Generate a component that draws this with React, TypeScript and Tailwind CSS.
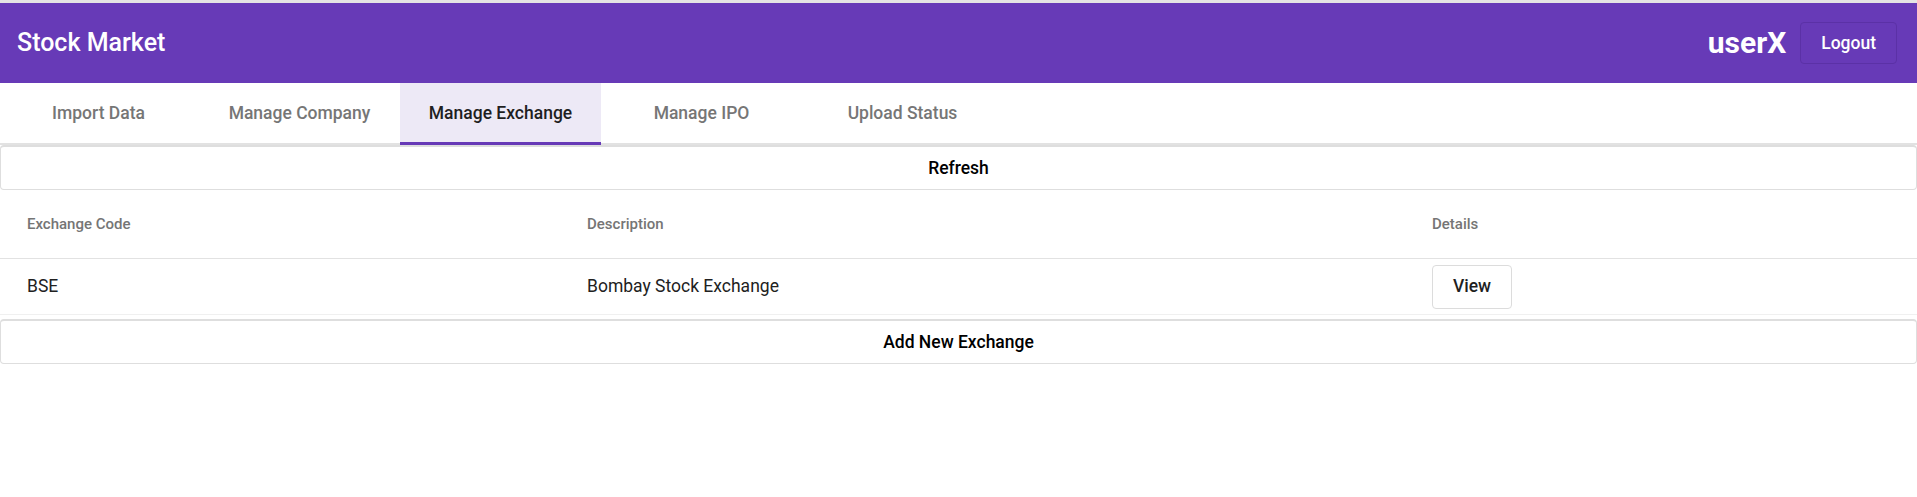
import { useState } from 'react';

const tabs = ['Import Data', 'Manage Company', 'Manage Exchange', 'Manage IPO', 'Upload Status'];

const exchanges = [{ code: 'BSE', description: 'Bombay Stock Exchange' }];

const App = () => {
  const [activeTab, setActiveTab] = useState(2);

  return (
    <div className="min-h-screen w-full overflow-hidden bg-white font-['Roboto',sans-serif]">
      <div className="h-[3px] bg-[#e4e4e4]" />

      <header className="flex h-[80px] items-center justify-between bg-[#673ab7] pl-[17px] pr-[20px]">
        <h1 className="text-[25px] font-medium text-white">Stock Market</h1>
        <div className="flex items-center gap-[14px]">
          <span className="text-[30px] font-bold leading-none text-white">userX</span>
          <button className="h-[42px] rounded-[4px] border border-[#5b31a6] px-[20px] text-[17.5px] font-medium text-white">Logout</button>
        </div>
      </header>

      <nav className="flex border-b-2 border-[#e2e2e2]">
        <div className="-ml-[2px] flex">
          {tabs.map((tab, i) => (
            <button
              key={tab}
              onClick={() => setActiveTab(i)}
              className={`-mb-[2px] h-[62px] w-[201px] border-b-[3px] pt-[2px] text-[17.5px] font-medium ${
                i === activeTab ? 'border-[#673ab7] bg-[#ede9f6] text-[#1f1f1f]' : 'border-transparent text-[#767676]'
              }`}
            >
              {tab}
            </button>
          ))}
        </div>
      </nav>

      <button className="flex h-[45px] w-full items-center justify-center rounded-[4px] border border-t-2 border-[#dedede] text-[17.5px] font-medium text-black">
        Refresh
      </button>

      <div className="grid h-[69px] grid-cols-[560px_845px_1fr] items-center border-b border-[#e2e2e2] px-[27px] text-[15px] font-medium text-[#757575]">
        <span>Exchange Code</span>
        <span>Description</span>
        <span>Details</span>
      </div>

      {exchanges.map(({ code, description }) => (
        <div key={code} className="grid h-[56px] grid-cols-[560px_845px_1fr] items-center border-b border-[#f0f0f0] px-[27px] text-[17.5px] text-[#212121]">
          <span>{code}</span>
          <span>{description}</span>
          <div>
            <button className="h-[44px] w-[80px] rounded-[4px] border border-[#dcdcdc] text-[17.5px] font-medium text-[#1f1f1f]">View</button>
          </div>
        </div>
      ))}

      <button className="mt-[4px] flex h-[45px] w-full items-center justify-center rounded-[4px] border border-t-2 border-[#dedede] text-[17.5px] font-medium text-black">
        Add New Exchange
      </button>
    </div>
  );
};

export default App;
